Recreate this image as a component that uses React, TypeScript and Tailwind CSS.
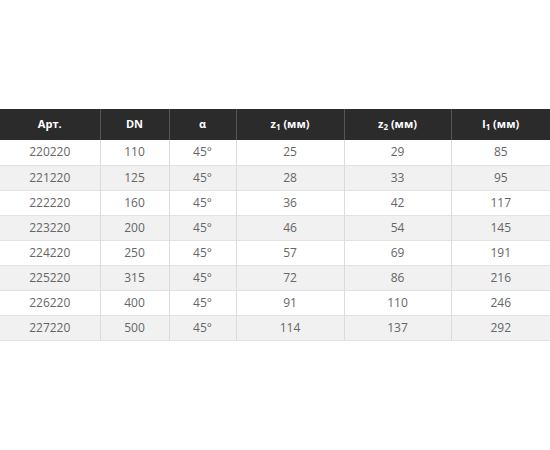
const rows = [
  ["220220", "110", "45°", "25", "29", "85"],
  ["221220", "125", "45°", "28", "33", "95"],
  ["222220", "160", "45°", "36", "42", "117"],
  ["223220", "200", "45°", "46", "54", "145"],
  ["224220", "250", "45°", "57", "69", "191"],
  ["225220", "315", "45°", "72", "86", "216"],
  ["226220", "400", "45°", "91", "110", "246"],
  ["227220", "500", "45°", "114", "137", "292"],
];

const widths = ["w-[100px]", "w-[69px]", "w-[67px]", "w-[108px]", "w-[107px]", "w-[99px]"];

const App = () => {
  return (
    <div className="w-[550px] h-[450px] bg-white pt-[109px] font-['Open_Sans',sans-serif]">
      <table className="w-[550px] table-fixed border-collapse">
        <thead>
          <tr className="bg-[#2b2b2b] text-white text-[11px] font-bold h-[31px]">
            <th className={`${widths[0]} border-r border-[#555]`}>Арт.</th>
            <th className={`${widths[1]} border-r border-[#555]`}>DN</th>
            <th className={`${widths[2]} border-r border-[#555]`}>α</th>
            <th className={`${widths[3]} border-r border-[#555]`}>
              z<sub className="text-[8px]">1</sub> (мм)
            </th>
            <th className={`${widths[4]} border-r border-[#555]`}>
              z<sub className="text-[8px]">2</sub> (мм)
            </th>
            <th className={widths[5]}>
              l<sub className="text-[8px]">1</sub> (мм)
            </th>
          </tr>
        </thead>
        <tbody className="text-[12px] text-[#666]">
          {rows.map((r, i) => (
            <tr
              key={r[0]}
              className={`h-[25px] border-b border-[#e2e2e2] ${i % 2 === 1 ? "bg-[#f1f1f1]" : "bg-white"}`}
            >
              {r.map((c, j) => (
                <td
                  key={j}
                  className={`text-center p-0 ${j < 5 ? "border-r border-[#dcdcdc]" : ""}`}
                >
                  {c}
                </td>
              ))}
            </tr>
          ))}
        </tbody>
      </table>
    </div>
  );
};

export default App;
